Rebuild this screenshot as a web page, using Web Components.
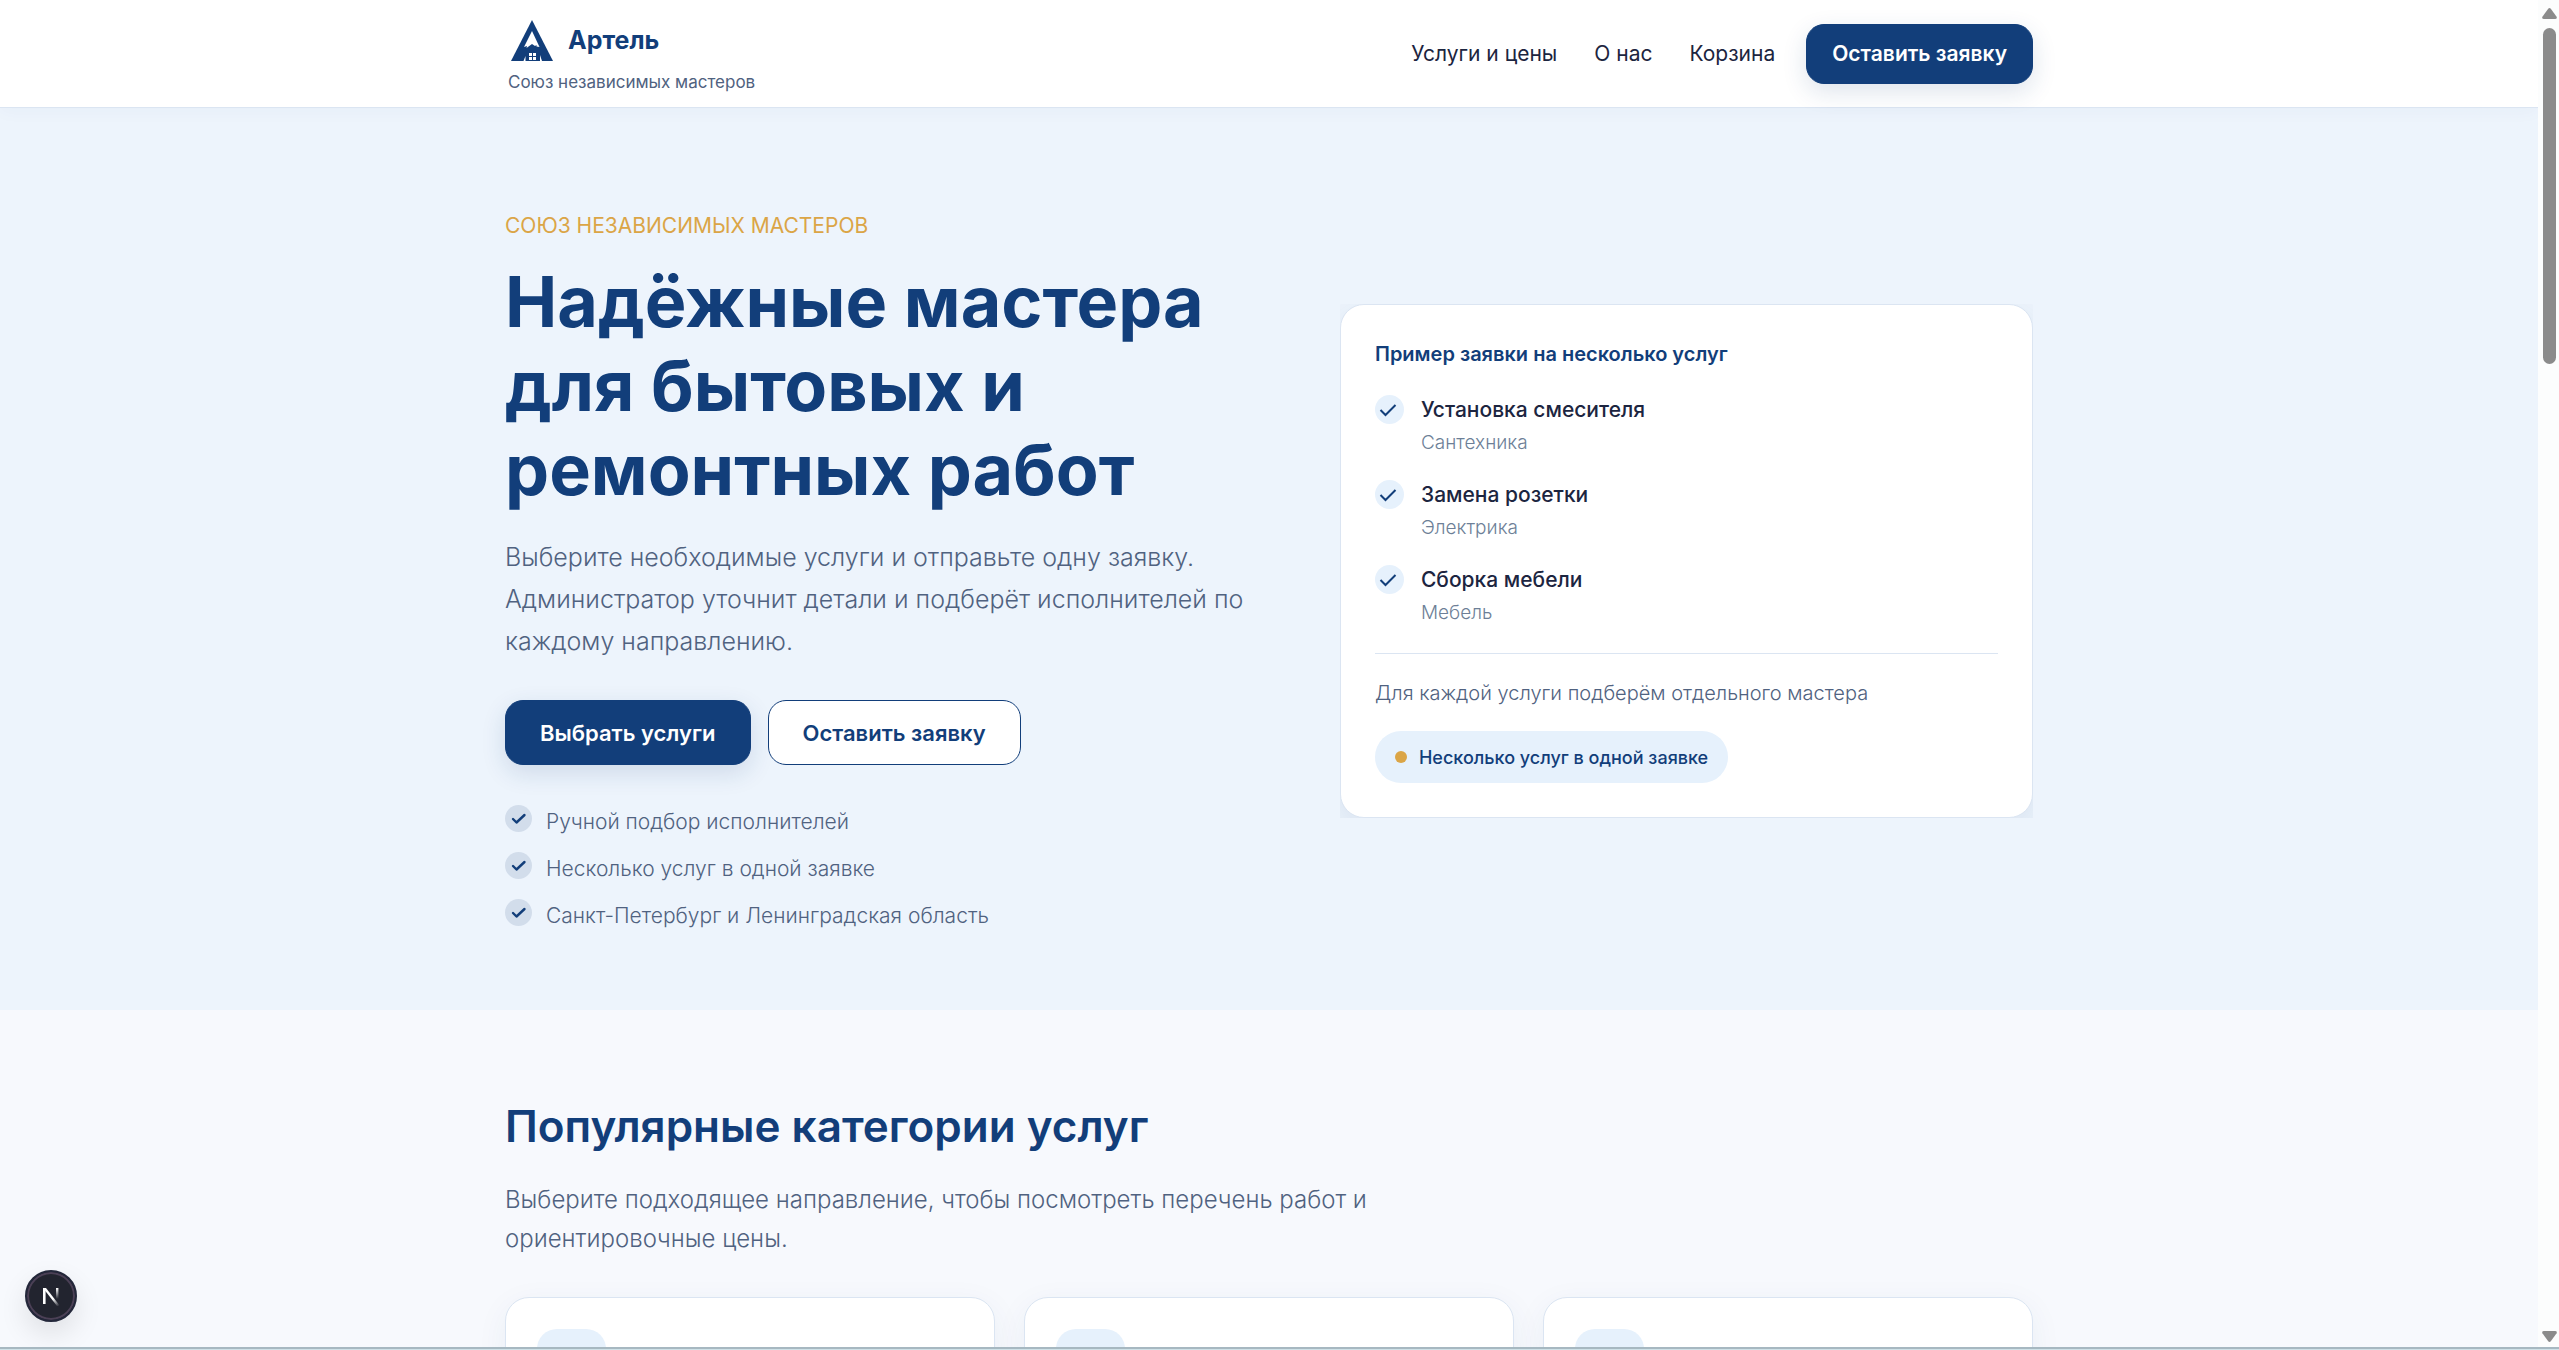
<!DOCTYPE html>
<html lang="ru">
<head>
<meta charset="utf-8">
<meta name="viewport" content="width=device-width, initial-scale=1">
<title>Артель</title>
<style>
:root {
    --navy: #123e7a;
    --ink: #1c2540;
    --muted: #506280;
    --soft: #6d7f97;
    --sky: #edf4fc;
    --tint: #e6f1fc;
    --line: #dbe5f2;
    --gold: #dba546;
}

body {
    margin: 0;
    font-family: Inter, "Noto Sans", sans-serif;
    color: var(--ink);
    background: #f7f9fd;
}
</style>
</head>
<body>

<app-window>
    <site-header>
        <nav-link href="#services">Услуги и цены</nav-link>
        <nav-link href="#about">О нас</nav-link>
        <nav-link href="#cart">Корзина</nav-link>
        <action-button slot="action" size="small">Оставить заявку</action-button>
    </site-header>

    <hero-section>
        <span slot="eyebrow">СОЮЗ НЕЗАВИСИМЫХ МАСТЕРОВ</span>
        <span slot="title">Надёжные мастера<br>для бытовых и<br>ремонтных работ</span>
        <span slot="lead">Выберите необходимые услуги и отправьте одну заявку. Администратор уточнит детали и подберёт исполнителей по каждому направлению.</span>
        <action-button slot="actions">Выбрать услуги</action-button>
        <action-button slot="actions" variant="outline">Оставить заявку</action-button>
        <check-item slot="points">Ручной подбор исполнителей</check-item>
        <check-item slot="points">Несколько услуг в одной заявке</check-item>
        <check-item slot="points">Санкт-Петербург и Ленинградская область</check-item>
        <request-card slot="aside">
            <span slot="title">Пример заявки на несколько услуг</span>
            <service-row category="Сантехника">Установка смесителя</service-row>
            <service-row category="Электрика">Замена розетки</service-row>
            <service-row category="Мебель">Сборка мебели</service-row>
            <span slot="note">Для каждой услуги подберём отдельного мастера</span>
            <span slot="badge">Несколько услуг в одной заявке</span>
        </request-card>
    </hero-section>

    <category-section>
        <span slot="title">Популярные категории услуг</span>
        <span slot="lead">Выберите подходящее направление, чтобы посмотреть перечень работ и ориентировочные цены.</span>
        <category-card></category-card>
        <category-card></category-card>
        <category-card></category-card>
    </category-section>

    <dev-badge slot="overlay"></dev-badge>
    <scroll-rail slot="rail"></scroll-rail>
</app-window>

<script>
function define(name, html, setup) {
    customElements.define(name, class extends HTMLElement {
        constructor() {
            super();
            this.attachShadow({mode: "open"}).innerHTML = html;
        }

        connectedCallback() {
            if(setup) setup(this, this.shadowRoot);
        }
    });
}


define("app-window", `
<style>
:host {
    display: grid;
    grid-template-columns: minmax(0, 1fr) 21px;
    grid-template-rows: minmax(0, 1fr) 3px;
    height: 100vh;
    overflow: hidden;
}

.page {
    position: relative;
    overflow: hidden;
}

.edge {
    grid-column: 1 / -1;
    box-sizing: border-box;
    background: #cfe2e8;
    border-top: 2px solid #a7b8c1;
}
</style>
<div class="page"><slot></slot><slot name="overlay"></slot></div>
<slot name="rail"></slot>
<div class="edge"></div>
`);


define("scroll-rail", `
<style>
:host {
    display: flex;
    flex-direction: column;
    align-items: center;
    box-sizing: border-box;
    padding: 8px 0 5px 2px;
    background: #fcfdfd;
}

svg {
    display: block;
    width: 15px;
    height: 11px;
    fill: #8b8b8b;
}

.thumb {
    width: 13px;
    height: 336px;
    margin: 9px 0 auto;
    border-radius: 7px;
    background: #8b8b8b;
}
</style>
<svg viewBox="0 0 15 11"><path d="M6.2.8Q7.5-.7 8.8.8L14.6 8.8Q15.4 11 13 11H2Q-.4 11 .4 8.8z"/></svg>
<div class="thumb"></div>
<svg viewBox="0 0 15 11"><path d="M6.2 10.2Q7.5 11.7 8.8 10.2L14.6 2.2Q15.4 0 13 0H2Q-.4 0 .4 2.2z"/></svg>
`);


define("dev-badge", `
<style>
:host {
    position: absolute;
    left: 25px;
    bottom: 25px;
}

button {
    display: grid;
    place-items: center;
    width: 52px;
    height: 52px;
    padding: 0;
    border: 2px solid #23273a;
    border-radius: 50%;
    background: #22242f;
    box-shadow: inset 0 0 0 2px #4b4056, 0 12px 28px rgba(0, 0, 0, .1);
}

svg {
    display: block;
}
</style>
<button type="button" aria-label="Next.js">
    <svg width="20" height="20" viewBox="0 0 20 20" fill="none">
        <defs>
            <linearGradient id="diag" x1="8" y1="8" x2="18" y2="20" gradientUnits="userSpaceOnUse">
                <stop offset=".4" stop-color="#fff"/><stop offset="1" stop-color="#fff" stop-opacity="0"/>
            </linearGradient>
            <linearGradient id="stem" x1="0" y1="2" x2="0" y2="13" gradientUnits="userSpaceOnUse">
                <stop stop-color="#fff"/><stop offset="1" stop-color="#fff" stop-opacity="0"/>
            </linearGradient>
        </defs>
        <path d="M2 18V2h2.600v16z" fill="#fff"/>
        <path d="M2 2h3L19 20h-3z" fill="url(#diag)"/>
        <path d="M15 2h2.400v11H15z" fill="url(#stem)"/>
    </svg>
</button>
`);


define("brand-logo", `
<style>
:host {
    display: block;
}

a {
    display: grid;
    gap: 6px;
    padding: 0 3px;
    color: var(--navy);
    text-decoration: none;
}

.row {
    display: flex;
    align-items: center;
    gap: 12px;
    height: 50px;
}

.name {
    font-size: 25px;
    font-weight: 700;
    line-height: 32px;
}

.tagline {
    font-size: 17px;
    font-weight: 400;
    line-height: 22px;
    color: var(--muted);
}
</style>
<a href="#top">
    <span class="row">
        <svg width="48" height="48" viewBox="0 0 48 48">
            <path fill="#123e7a" d="M24 4L45 45H3z"/>
            <path fill="#fff" d="M24 15L31.500 31L28.500 30.500V29L27 30L24 28L18.500 32L19 30L16 31z"/>
            <path fill="#fff" d="M21 37h3v3h-3zM25 37h3v3h-3zM21 41h3v3h-3zM25 41h3v3h-3zM15.500 45l2-5v5zM32 45v-6l2 6z"/>
        </svg>
        <span class="name">Артель</span>
    </span>
    <span class="tagline">Союз независимых мастеров</span>
</a>
`);


define("nav-link", `
<style>
:host {
    display: block;
}

a {
    font-size: 21px;
    font-weight: 400;
    line-height: 32px;
    color: var(--ink);
    text-decoration: none;
}
</style>
<a><slot></slot></a>
`, (host, root) => {
    root.querySelector("a").href = host.getAttribute("href");
});


define("action-button", `
<style>
:host {
    display: block;
}

button {
    display: block;
    box-sizing: border-box;
    height: 65px;
    padding: 0 34px;
    border: 1px solid var(--navy);
    border-radius: 18px;
    background: var(--navy);
    box-shadow: 0 8px 24px rgba(18, 62, 122, .14);
    font: 600 22px/32px Inter, "Noto Sans", sans-serif;
    color: #fff;
    white-space: nowrap;
    cursor: pointer;
}

:host([variant="outline"]) button {
    background: #fff;
    box-shadow: none;
    color: var(--navy);
}

:host([size="small"]) button {
    height: 60px;
    padding: 0 25px;
    font-size: 21px;
}
</style>
<button type="button"><slot></slot></button>
`);


define("site-header", `
<style>
:host {
    position: relative;
    z-index: 1;
    display: block;
    background: #fff;
    border-bottom: 1px solid var(--line);
    box-shadow: 0 4px 16px rgba(18, 62, 122, .03);
}

.inner {
    display: flex;
    align-items: center;
    justify-content: space-between;
    max-width: 1528px;
    height: 107px;
    margin: 0 auto;
}

nav {
    display: flex;
    align-items: center;
    gap: 37px;
}

.right {
    display: flex;
    align-items: center;
    gap: 31px;
}
</style>
<header class="inner">
    <brand-logo></brand-logo>
    <div class="right">
        <nav><slot></slot></nav>
        <slot name="action"></slot>
    </div>
</header>
`);


define("check-item", `
<style>
:host {
    display: flex;
    align-items: flex-start;
    gap: 14px;
    font-size: 21px;
    font-weight: 300;
    line-height: 33px;
    color: var(--muted);
}

svg {
    flex: none;
}
</style>
<svg width="27" height="27" viewBox="0 0 27 27" fill="none">
    <circle cx="13.500" cy="13.500" r="13.500" fill="#d2ddeb"/>
    <path d="M8 14l3.500 3.500L19.500 10" stroke="#123e7a" stroke-width="2.400" stroke-linecap="round" stroke-linejoin="round"/>
</svg>
<span><slot></slot></span>
`, host => host.setAttribute("role", "listitem"));


define("service-row", `
<style>
:host {
    display: grid;
    grid-template-columns: 29px minmax(0, 1fr);
    column-gap: 17px;
    row-gap: 5px;
}

.name {
    font-size: 21px;
    font-weight: 500;
    line-height: 29px;
}

.category {
    grid-column: 2;
    font-size: 19px;
    font-weight: 300;
    line-height: 28px;
    color: var(--soft);
}
</style>
<svg width="29" height="29" viewBox="0 0 29 29" fill="none">
    <circle cx="14.500" cy="14.500" r="14.500" fill="#e6f1fc"/>
    <path d="M5.500 15l5 5L20.500 10" stroke="#123e7a" stroke-width="2"/>
</svg>
<span class="name"><slot></slot></span>
<span class="category"></span>
`, (host, root) => {
    host.setAttribute("role", "listitem");
    root.querySelector(".category").textContent = host.getAttribute("category");
});


define("request-card", `
<style>
:host {
    display: block;
    overflow: hidden;
}

.card {
    padding: 34px;
    border: 1px solid var(--line);
    border-radius: 24px;
    background: #fff;
    box-shadow: 0 12px 40px rgba(18, 62, 122, .1);
}

h2 {
    margin: 0 0 26px;
    font-size: 20px;
    font-weight: 600;
    line-height: 30px;
    color: var(--navy);
}

.rows {
    display: grid;
    gap: 23px;
    padding-bottom: 26px;
    border-bottom: 1px solid var(--line);
}

p {
    margin: 24px 0 23px;
    font-size: 20px;
    font-weight: 300;
    line-height: 30px;
    color: var(--muted);
}

.badge {
    display: inline-flex;
    align-items: center;
    gap: 12px;
    height: 52px;
    padding: 0 20px;
    border-radius: 26px;
    background: var(--tint);
    font-size: 18px;
    font-weight: 500;
    color: var(--navy);
    vertical-align: top;
}

.badge::before {
    content: "";
    width: 12px;
    height: 12px;
    border-radius: 50%;
    background: var(--gold);
}
</style>
<section class="card">
    <h2><slot name="title"></slot></h2>
    <div class="rows" role="list"><slot></slot></div>
    <p><slot name="note"></slot></p>
    <div class="badge"><slot name="badge"></slot></div>
</section>
`);


define("hero-section", `
<style>
:host {
    display: block;
    padding: 82px 0 78px;
    background: var(--sky);
}

.inner {
    display: grid;
    grid-template-columns: 21fr 19fr;
    gap: 69px;
    align-items: center;
    max-width: 1528px;
    margin: 0 auto;
}

.copy {
    padding-top: 20px;
}

.eyebrow {
    margin: 0 0 18px;
    font-size: 21px;
    font-weight: 400;
    line-height: 32px;
    color: var(--gold);
}

h1 {
    margin: 0 0 24px;
    font-size: 70px;
    font-weight: 700;
    line-height: 84px;
    color: var(--navy);
}

.lead {
    margin: 0 0 38px;
    font-size: 25px;
    font-weight: 300;
    line-height: 42px;
    color: var(--muted);
}

.actions {
    display: flex;
    gap: 17px;
    margin-bottom: 40px;
}

.points {
    display: grid;
    gap: 14px;
}
</style>
<section class="inner">
    <div class="copy">
        <p class="eyebrow"><slot name="eyebrow"></slot></p>
        <h1><slot name="title"></slot></h1>
        <p class="lead"><slot name="lead"></slot></p>
        <div class="actions"><slot name="actions"></slot></div>
        <div class="points" role="list"><slot name="points"></slot></div>
    </div>
    <slot name="aside"></slot>
</section>
`);


define("category-card", `
<style>
:host {
    display: block;
    min-height: 280px;
    padding: 31px;
    border: 1px solid var(--line);
    border-radius: 24px;
    background: #fff;
    box-shadow: 0 8px 32px rgba(18, 62, 122, .06);
}

.icon {
    width: 69px;
    height: 69px;
    border-radius: 20px;
    background: var(--tint);
}
</style>
<div class="icon"></div>
<slot></slot>
`);


define("category-section", `
<style>
:host {
    display: block;
    padding: 88px 0;
}

.inner {
    max-width: 1528px;
    margin: 0 auto;
}

h2 {
    margin: 0 0 26px;
    font-size: 44px;
    font-weight: 600;
    line-height: 56px;
    color: var(--navy);
}

p {
    max-width: 900px;
    margin: 0 0 39px;
    font-size: 24px;
    font-weight: 300;
    line-height: 39px;
    color: var(--muted);
}

.grid {
    display: grid;
    grid-template-columns: repeat(3, minmax(0, 1fr));
    gap: 29px;
}
</style>
<section class="inner">
    <h2><slot name="title"></slot></h2>
    <p><slot name="lead"></slot></p>
    <div class="grid"><slot></slot></div>
</section>
`);
</script>
</body>
</html>
